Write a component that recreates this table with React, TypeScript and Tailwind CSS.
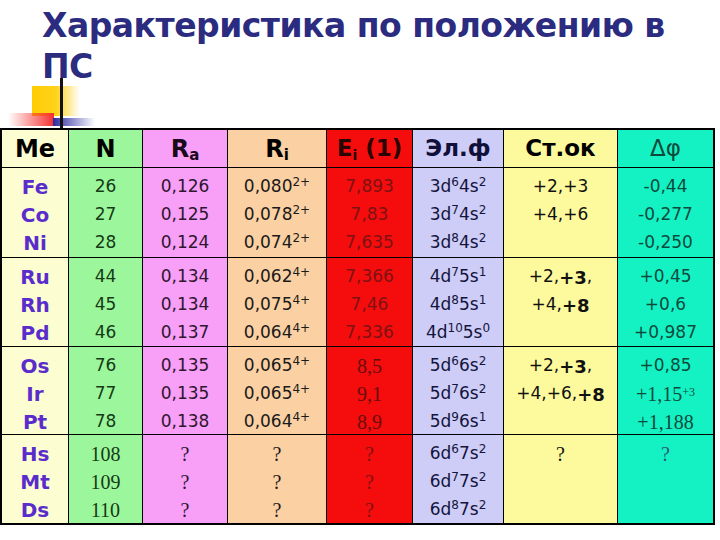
import React from "react";

type Line = React.ReactNode;

const sans = { fontFamily: '"DejaVu Sans", Verdana, sans-serif' };
const serif = { fontFamily: '"Liberation Serif", "Times New Roman", serif' };

function Sup({ children }: { children: React.ReactNode }) {
  return <sup className="text-[12px] top-[-0.45em]">{children}</sup>;
}

function Group({
  lines,
  color,
  cls = "",
  serifFont = false,
}: {
  lines: Line[];
  color: string;
  cls?: string;
  serifFont?: boolean;
}) {
  return (
    <div
      className={`flex flex-col items-center pt-[5px] ${color} ${cls}`}
      style={serifFont ? serif : sans}
    >
      {lines.map((l, i) => (
        <div key={i} className="h-[28px] flex items-center justify-center whitespace-nowrap">
          {l}
        </div>
      ))}
    </div>
  );
}

const colBg = [
  "bg-[#fdfdd2]",
  "bg-[#9cf79c]",
  "bg-[#f8a0f8]",
  "bg-[#fbd0a2]",
  "bg-[#f50d0d]",
  "bg-[#cdcdf7]",
  "bg-[#fdfa9d]",
  "bg-[#14f2c4]",
];

export default function App() {
  const headers: React.ReactNode[] = [
    <span className="font-bold text-[24px] text-black">Me</span>,
    <span className="font-bold text-[24px] text-black">N</span>,
    <span className="font-bold text-[24px] text-[#1a0a1a]">
      R<sub className="text-[15px]">a</sub>
    </span>,
    <span className="font-bold text-[24px] text-black">
      R<sub className="text-[15px]">i</sub>
    </span>,
    <span className="font-bold text-[23px] text-[#2a0303]">
      E<sub className="text-[14px]">i</sub> (1)
    </span>,
    <span className="font-bold text-[23px] text-[#10103a]">Эл.ф</span>,
    <span className="font-bold text-[23px] text-black">Ст.ок</span>,
    <span className="text-[23px] text-[#0d4a3c]">Δφ</span>,
  ];

  const el = "font-bold text-[20px] text-[#5a2ccc]";
  const d = "text-[17px]";

  const groups: React.ReactNode[][] = [
    [
      <Group lines={["Fe", "Co", "Ni"]} color={el} />,
      <Group lines={["26", "27", "28"]} color={`${d} text-[#163a16]`} />,
      <Group lines={["0,126", "0,125", "0,124"]} color={`${d} text-[#2e162e]`} />,
      <Group
        lines={[
          <>0,080<Sup>2+</Sup></>,
          <>0,078<Sup>2+</Sup></>,
          <>0,074<Sup>2+</Sup></>,
        ]}
        color={`${d} text-[#1a1a1a]`}
      />,
      <Group lines={["7,893", "7,83", "7,635"]} color={`${d} text-[#7e1212]`} />,
      <Group
        lines={[
          <>3d<Sup>6</Sup>4s<Sup>2</Sup></>,
          <>3d<Sup>7</Sup>4s<Sup>2</Sup></>,
          <>3d<Sup>8</Sup>4s<Sup>2</Sup></>,
        ]}
        color={`${d} text-[#14143c]`}
      />,
      <Group lines={["+2,+3", "+4,+6", ""]} color={`${d} text-[#111]`} />,
      <Group lines={["-0,44", "-0,277", "-0,250"]} color={`${d} text-[#0d4a3c]`} />,
    ],
    [
      <Group lines={["Ru", "Rh", "Pd"]} color={el} />,
      <Group lines={["44", "45", "46"]} color={`${d} text-[#163a16]`} />,
      <Group lines={["0,134", "0,134", "0,137"]} color={`${d} text-[#2e162e]`} />,
      <Group
        lines={[
          <>0,062<Sup>4+</Sup></>,
          <>0,075<Sup>4+</Sup></>,
          <>0,064<Sup>4+</Sup></>,
        ]}
        color={`${d} text-[#1a1a1a]`}
      />,
      <Group lines={["7,366", "7,46", "7,336"]} color={`${d} text-[#7e1212]`} />,
      <Group
        lines={[
          <>4d<Sup>7</Sup>5s<Sup>1</Sup></>,
          <>4d<Sup>8</Sup>5s<Sup>1</Sup></>,
          <>4d<Sup>10</Sup>5s<Sup>0</Sup></>,
        ]}
        color={`${d} text-[#14143c]`}
      />,
      <Group
        lines={[
          <>+2,<b className="text-[18px]">+3</b>,</>,
          <>+4,<b className="text-[18px]">+8</b></>,
          "",
        ]}
        color={`${d} text-[#111]`}
      />,
      <Group lines={["+0,45", "+0,6", "+0,987"]} color={`${d} text-[#0d4a3c]`} />,
    ],
    [
      <Group lines={["Os", "Ir", "Pt"]} color={el} />,
      <Group lines={["76", "77", "78"]} color={`${d} text-[#163a16]`} />,
      <Group lines={["0,135", "0,135", "0,138"]} color={`${d} text-[#2e162e]`} />,
      <Group
        lines={[
          <>0,065<Sup>4+</Sup></>,
          <>0,065<Sup>4+</Sup></>,
          <>0,064<Sup>4+</Sup></>,
        ]}
        color={`${d} text-[#1a1a1a]`}
      />,
      <Group lines={["8,5", "9,1", "8,9"]} color="text-[20px] text-[#6a0c0c]" serifFont />,
      <Group
        lines={[
          <>5d<Sup>6</Sup>6s<Sup>2</Sup></>,
          <>5d<Sup>7</Sup>6s<Sup>2</Sup></>,
          <>5d<Sup>9</Sup>6s<Sup>1</Sup></>,
        ]}
        color={`${d} text-[#14143c]`}
      />,
      <Group
        lines={[
          <>+2,<b className="text-[18px]">+3</b>,</>,
          <>+4,+6, <b className="text-[18px]">+8</b></>,
          "",
        ]}
        color={`${d} text-[#111]`}
      />,
      <Group
        lines={[
          <span style={sans}>+0,85</span>,
          <span className="text-[20px]" style={serif}>
            +1,15<Sup>+3</Sup>
          </span>,
          <span className="text-[20px]" style={serif}>+1,188</span>,
        ]}
        color={`${d} text-[#0d4a3c]`}
      />,
    ],
    [
      <Group lines={["Hs", "Mt", "Ds"]} color={el} />,
      <Group lines={["108", "109", "110"]} color="text-[20px] text-[#163a16]" serifFont />,
      <Group lines={["?", "?", "?"]} color="text-[20px] text-[#2e162e]" serifFont />,
      <Group lines={["?", "?", "?"]} color="text-[20px] text-[#1a1a1a]" serifFont />,
      <Group lines={["?", "?", "?"]} color="text-[20px] text-[#7e1212]" serifFont />,
      <Group
        lines={[
          <>6d<Sup>6</Sup>7s<Sup>2</Sup></>,
          <>6d<Sup>7</Sup>7s<Sup>2</Sup></>,
          <>6d<Sup>8</Sup>7s<Sup>2</Sup></>,
        ]}
        color={`${d} text-[#14143c]`}
      />,
      <Group lines={["?", "", ""]} color="text-[20px] text-[#111]" serifFont />,
      <Group lines={["?", "", ""]} color="text-[20px] text-[#2a5a7a]" serifFont />,
    ],
  ];

  return (
    <div className="w-[720px] h-[540px] bg-white overflow-hidden relative" style={sans}>
      {/* Title */}
      <div className="pl-[42px] pt-[5px] h-[128px] relative">
        <h1
          className="font-bold text-[33px] leading-[41px] text-[#2b2b80] tracking-[-0.5px] whitespace-nowrap"
          style={sans}
        >
          Характеристика по положению в
          <br />
          ПС
        </h1>
        {/* decoration */}
        <div className="absolute left-[32px] top-[86px] w-[48px] h-[30px] bg-gradient-to-r from-[#ffcc00] via-[#ffd21a] to-transparent" />
        <div className="absolute left-[8px] top-[113px] w-[46px] h-[13px] bg-gradient-to-r from-transparent to-[#f53030]" />
        <div className="absolute left-[53px] top-[118px] w-[42px] h-[8px] bg-gradient-to-r from-[#2a2aa0] to-transparent" />
        <div className="absolute left-[60px] top-[78px] w-[3px] h-[50px] bg-[#111]" />
      </div>

      {/* Table */}
      <div className="w-[715px] border-2 border-black bg-black grid grid-cols-[66px_73px_84px_98px_85px_90px_113px_95px] grid-rows-[37px_89px_88px_87px_88px] gap-px">
        {headers.map((h, i) => (
          <div key={`h${i}`} className={`${colBg[i]} flex items-center justify-center`} style={sans}>
            {h}
          </div>
        ))}
        {groups.map((g, gi) =>
          g.map((cell, ci) => (
            <div key={`g${gi}-${ci}`} className={colBg[ci]}>
              {cell}
            </div>
          ))
        )}
      </div>
    </div>
  );
}
